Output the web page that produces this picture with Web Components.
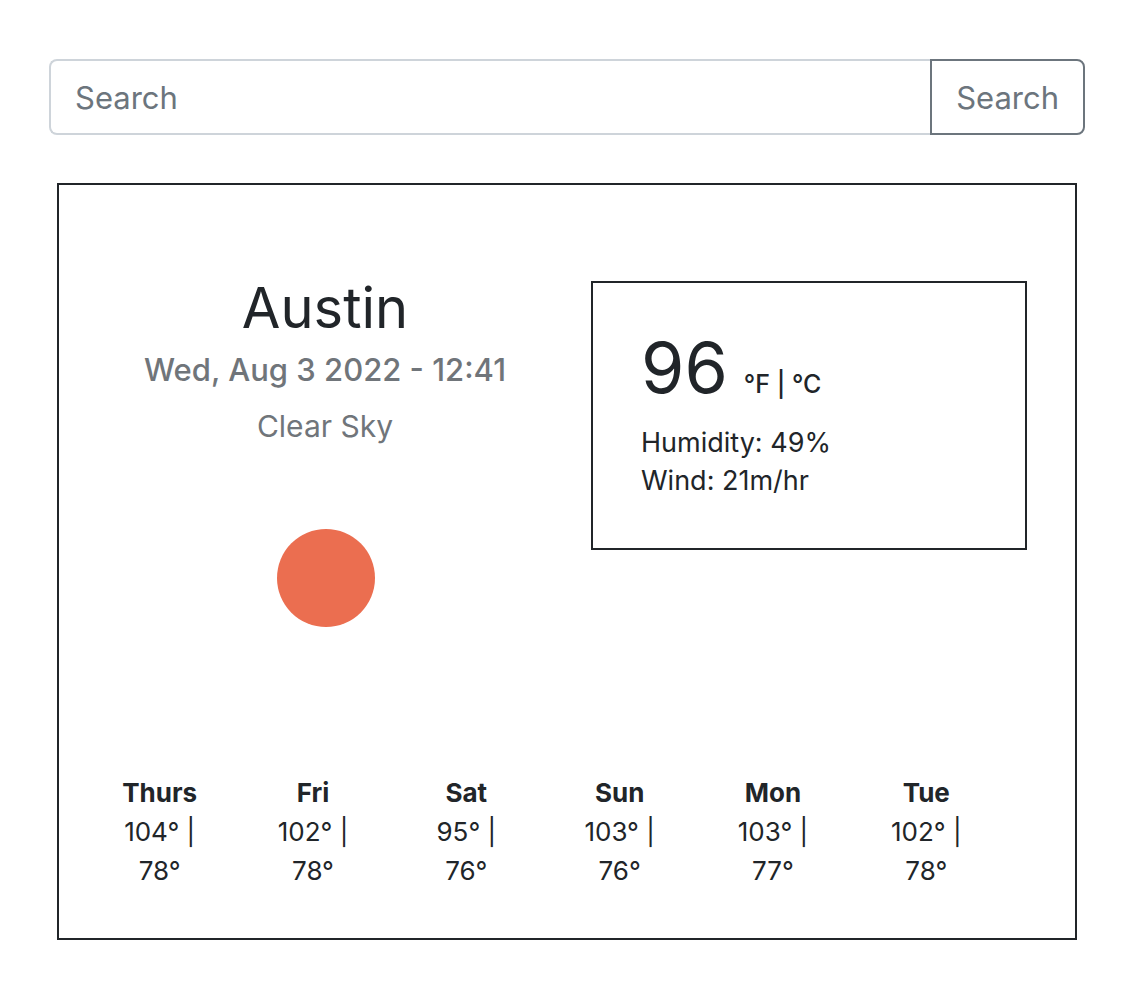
<!DOCTYPE html>
<html lang="en">
<head>
<meta charset="utf-8">
<meta name="viewport" content="width=device-width, initial-scale=1">
<title>Weather</title>
<style>
  body {
    margin: 0;
    padding: 59px 60px 49px 49px;
    background: #fff;
    color: #212529;
    font-family: Inter, "Liberation Sans", sans-serif;
    --ink: #212529;
    --muted: #6c757d;
  }
</style>
</head>
<body>
<weather-app></weather-app>

<script>
const define = (name, html, setup) => {
  const template = document.createElement('template');
  template.innerHTML = html;
  customElements.define(name, class extends HTMLElement {
    connectedCallback() {
      if (this.shadowRoot) return;
      this.attachShadow({ mode: 'open' }).append(template.content.cloneNode(true));
      if (setup) setup(this);
    }
  });
};

define('search-bar', `
  <style>
    :host { display: block; }
    form { display: flex; margin: 0; }
    input, button {
      box-sizing: border-box;
      height: 76px;
      margin: 0;
      padding: 0 24px;
      font: inherit;
      font-size: 31px;
      background: #fff;
    }
    input {
      flex: 1;
      min-width: 0;
      border: 2px solid #ced4da;
      border-right: 0;
      border-radius: 8px 0 0 8px;
      color: var(--ink);
    }
    input::placeholder { color: var(--muted); opacity: 1; }
    button {
      border: 2px solid var(--muted);
      border-radius: 0 8px 8px 0;
      color: var(--muted);
      cursor: pointer;
    }
  </style>
  <form role="search" onsubmit="return false">
    <input type="search" placeholder="Search" aria-label="Search">
    <button type="submit">Search</button>
  </form>
`);

define('city-summary', `
  <style>
    :host { display: flex; flex-direction: column; align-items: center; gap: 14px; text-align: center; }
    h1, h2, p { margin: 0; }
    h1 { font-size: 56px; line-height: 55px; font-weight: 400; }
    h2 { font-size: 31px; line-height: 40px; font-weight: 500; color: #70757a; }
    p { font-size: 30px; line-height: 44px; color: #70757a; }
    svg { display: block; width: 100px; height: 98px; margin-top: 67px; }
  </style>
  <h1><slot name="city"></slot></h1>
  <h2><slot name="date"></slot></h2>
  <p><slot name="sky"></slot></p>
  <svg viewBox="0 0 100 98" role="img" aria-label="Sun"><circle cx="51" cy="49" r="49" fill="#eb6e50"/></svg>
`);

define('current-conditions', `
  <style>
    :host { display: block; border: 2px solid var(--ink); padding: 48px; }
    div { display: flex; align-items: baseline; gap: 16px; margin-bottom: 19px; }
    strong { font-size: 70px; line-height: 74px; font-weight: 400; }
    span { font-size: 25px; line-height: 38px; font-weight: 500; }
    p { margin: 0; font-size: 27px; line-height: 38px; }
  </style>
  <div><strong><slot name="temperature"></slot></strong><span>°F | °C</span></div>
  <p>Humidity: <slot name="humidity"></slot></p>
  <p>Wind: <slot name="wind"></slot></p>
`);

define('forecast-table', `
  <style>
    :host { display: block; }
    table { width: 100%; table-layout: fixed; border-collapse: collapse; text-align: center; }
    th, td { padding: 0; font-size: 26px; line-height: 39px; }
    th { font-weight: 700; }
  </style>
  <table>
    <thead><tr></tr></thead>
    <tbody><tr></tr></tbody>
  </table>
`, host => {
  const [head, body] = host.shadowRoot.querySelectorAll('tr');
  for (const entry of host.getAttribute('days').split(',')) {
    const [day, high, low] = entry.split(' ');
    head.insertAdjacentHTML('beforeend', `<th scope="col">${day}</th>`);
    body.insertAdjacentHTML('beforeend', `<td>${high}° |<br>${low}°</td>`);
  }
});

define('weather-card', `
  <style>
    :host { display: block; border: 2px solid var(--ink); padding: 96px 24px 48px; }
    .today { display: grid; grid-template-columns: 1fr 1fr; align-items: start; margin-bottom: 146px; }
    .now { padding: 0 24px; }
    .week { padding-right: 48px; }
  </style>
  <div class="today">
    <slot name="summary"></slot>
    <div class="now"><slot name="now"></slot></div>
  </div>
  <div class="week"><slot name="week"></slot></div>
`);

define('weather-app', `
  <style>
    :host { display: block; }
    weather-card { margin: 48px 8px 0; }
  </style>
  <search-bar></search-bar>
  <weather-card>
    <city-summary slot="summary">
      <span slot="city">Austin</span>
      <span slot="date">Wed, Aug 3 2022 - 12:41</span>
      <span slot="sky">Clear Sky</span>
    </city-summary>
    <current-conditions slot="now">
      <span slot="temperature">96</span>
      <span slot="humidity">49%</span>
      <span slot="wind">21m/hr</span>
    </current-conditions>
    <forecast-table slot="week" days="Thurs 104 78,Fri 102 78,Sat 95 76,Sun 103 76,Mon 103 77,Tue 102 78"></forecast-table>
  </weather-card>
`);
</script>
</body>
</html>
